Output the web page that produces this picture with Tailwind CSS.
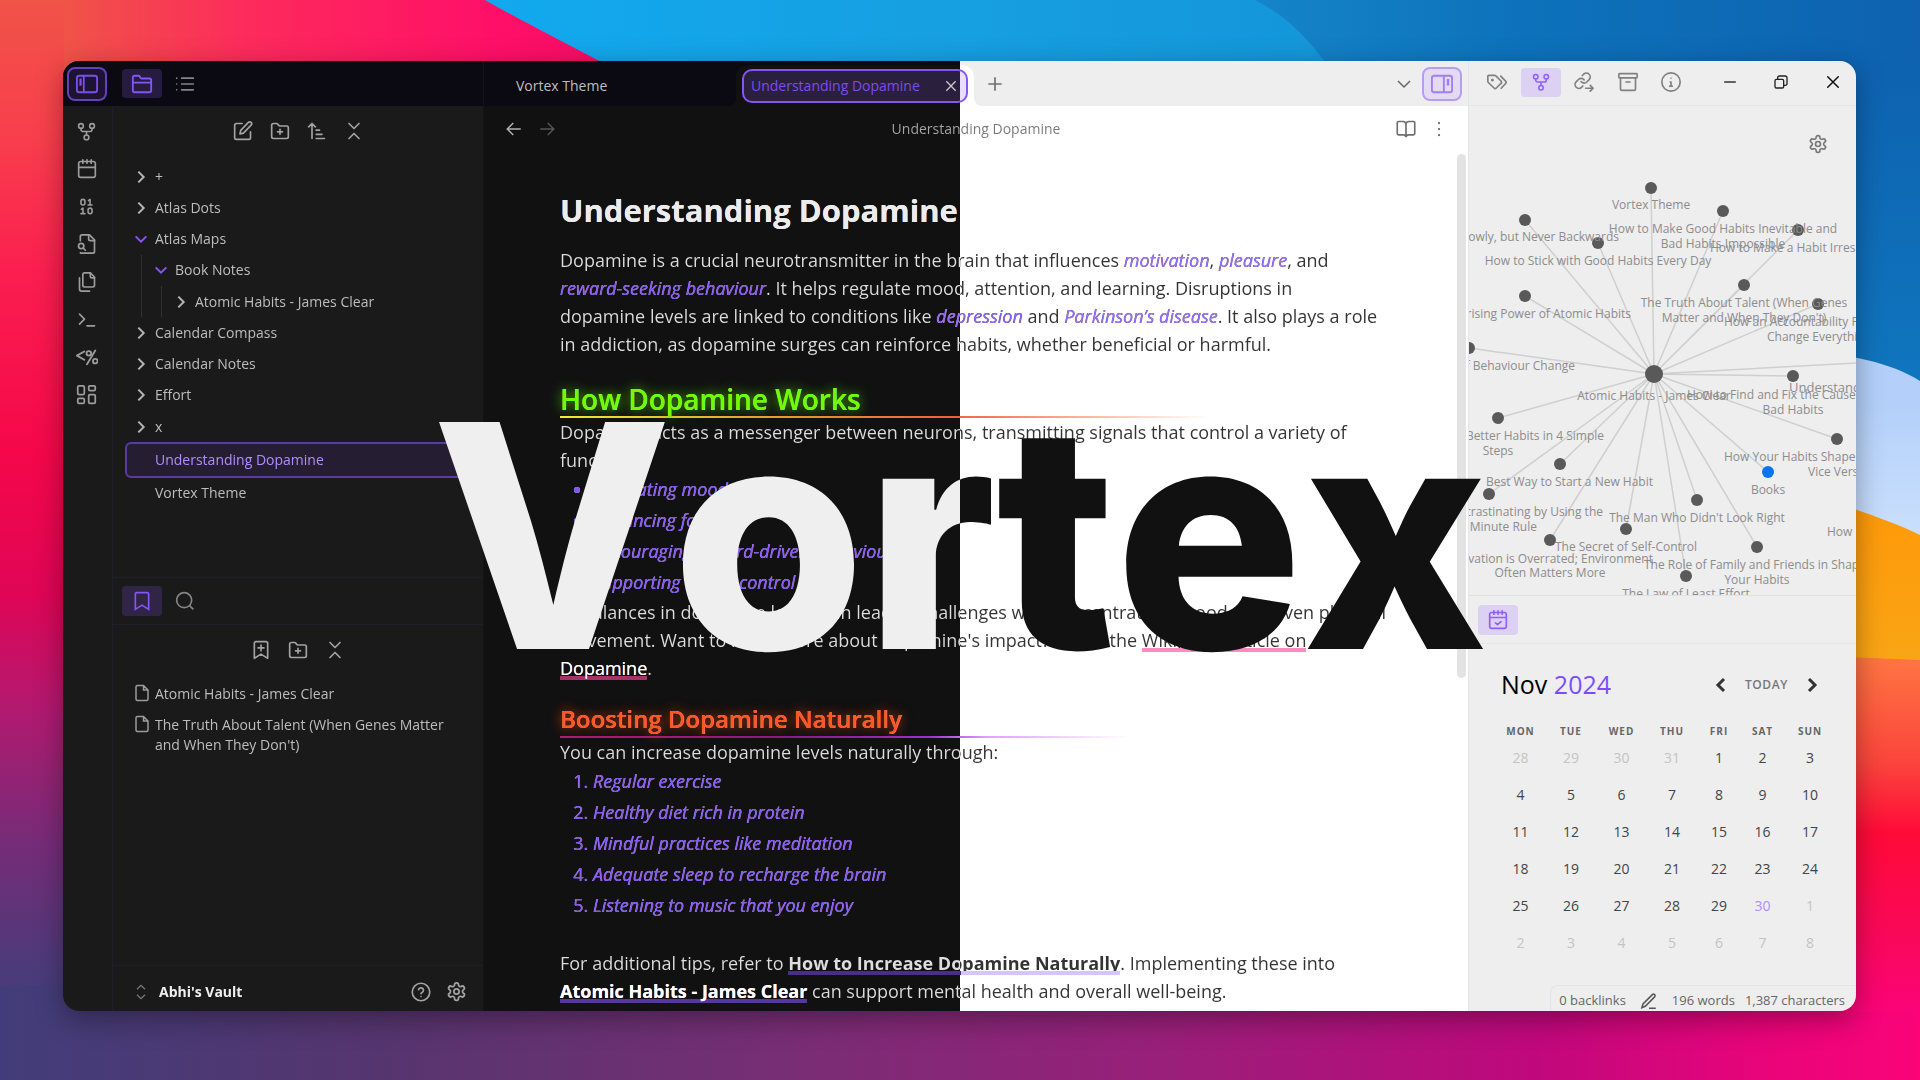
<!DOCTYPE html>
<html lang="en">
<head>
<meta charset="utf-8">
<meta name="viewport" content="width=device-width, initial-scale=1">
<title>Vortex</title>
<script src="https://cdn.jsdelivr.net/npm/@tailwindcss/browser@4"></script>
</head>
<body class="font-['Open_Sans','Noto_Sans',sans-serif] text-sm">

<!-- Icon sprite -->
<svg class="hidden" xmlns="http://www.w3.org/2000/svg">
  <symbol id="fork" viewBox="0 0 24 24"><circle cx="12" cy="19.500" r="3"/><circle cx="5" cy="5" r="3"/><circle cx="19" cy="5" r="3"/><path d="M5 8v1.500a2.500 2.500 0 0 0 2.500 2.500h9a2.500 2.500 0 0 0 2.500-2.500V8M12 12v4.500"/></symbol>
  <symbol id="calendar" viewBox="0 0 24 24"><path d="M7 1v4M12 1v4M17 1v4M2 10h20"/><rect x="2" y="3" width="20" height="19" rx="2.500"/></symbol>
  <symbol id="binary" viewBox="0 0 24 24"><rect x="5" y="3" width="5" height="7" rx="2.500"/><rect x="14" y="14" width="5" height="7" rx="2.500"/><path d="M14 10h5M14.500 4.500 16.500 3v7M5 21h5M5.500 15.500 7.500 14v7"/></symbol>
  <symbol id="filesearch" viewBox="0 0 24 24"><path d="M14 1v5a2 2 0 0 0 2 2h5"/><path d="M4 22.500c.5.400 1 .5 1.500.5H19a2 2 0 0 0 2-2V7l-6-6H6a2 2 0 0 0-2 2v5"/><circle cx="5" cy="14.500" r="3.200"/><path d="m7.500 17 2.500 2.500"/></symbol>
  <symbol id="files" viewBox="0 0 24 24"><path d="M21 7h-3a2 2 0 0 1-2-2V1"/><path d="M21 6v10a2 2 0 0 1-2 2H9a2 2 0 0 1-2-2V3a2 2 0 0 1 2-2h7z"/><path d="M3 7v13.500A2.500 2.500 0 0 0 5.500 23H15"/></symbol>
  <symbol id="terminal" viewBox="0 0 24 24"><path d="m3 17 6-6-6-6M12 19h9"/></symbol>
  <symbol id="template" viewBox="0 0 24 24"><path d="M9 6 1 10.500 9 15M21 5l-9 15"/><circle cx="14" cy="8" r="2.500"/><circle cx="21" cy="16.500" r="2.500"/></symbol>
  <symbol id="dashboard" viewBox="0 0 24 24"><rect x="2" y="2" width="7.500" height="10" rx="1.500"/><rect x="14.500" y="2" width="7.500" height="5.500" rx="1.500"/><rect x="14.500" y="12" width="7.500" height="10" rx="1.500"/><rect x="2" y="16.500" width="7.500" height="5.500" rx="1.500"/></symbol>
  <symbol id="folder" viewBox="0 0 24 24"><path d="M4 21h16a2 2 0 0 0 2-2V8a2 2 0 0 0-2-2h-8a2 2 0 0 1-1.700-.9l-.8-1.200A2 2 0 0 0 7.900 3H4a2 2 0 0 0-2 2v14a2 2 0 0 0 2 2zM2 10.500h20"/></symbol>
  <symbol id="folderplus" viewBox="0 0 24 24"><path d="M4 21h16a2 2 0 0 0 2-2V8a2 2 0 0 0-2-2h-8a2 2 0 0 1-1.700-.9l-.8-1.200A2 2 0 0 0 7.900 3H4a2 2 0 0 0-2 2v14a2 2 0 0 0 2 2zM12 10v6M9 13h6"/></symbol>
  <symbol id="list" viewBox="0 0 24 24"><path d="M8 5h14M8 12h14M8 19h14M2 5h.01M2 12h.01M2 19h.01"/></symbol>
  <symbol id="edit" viewBox="0 0 24 24"><path d="M11 3H4a2 2 0 0 0-2 2v15a2 2 0 0 0 2 2h15a2 2 0 0 0 2-2v-7M18.500 1.700a2.200 2.200 0 0 1 3.200 3.200L12.500 14.500l-4.200 1 1-4.200z"/></symbol>
  <symbol id="sort" viewBox="0 0 24 24"><path d="m2 7 4-4 4 4M6 3v18M11 11h4M11 16h7M11 21h10"/></symbol>
  <symbol id="collapse" viewBox="0 0 24 24"><path d="m6 21 6-6 6 6M6 3l6 6 6-6"/></symbol>
  <symbol id="updown" viewBox="0 0 24 24"><path d="m6 16 6 6 6-6M6 8l6-6 6 6"/></symbol>
  <symbol id="right" viewBox="0 0 24 24"><path d="m8 4 8 8-8 8"/></symbol>
  <symbol id="left" viewBox="0 0 24 24"><path d="m16 4-8 8 8 8"/></symbol>
  <symbol id="down" viewBox="0 0 24 24"><path d="m4 8 8 8 8-8"/></symbol>
  <symbol id="bookmark" viewBox="0 0 24 24"><path d="m20 22-8-5-8 5V4a2 2 0 0 1 2-2h12a2 2 0 0 1 2 2z"/></symbol>
  <symbol id="bookmarkplus" viewBox="0 0 24 24"><path d="m20 22-8-5-8 5V4a2 2 0 0 1 2-2h12a2 2 0 0 1 2 2zM12 6v7M8.500 9.500h7"/></symbol>
  <symbol id="search" viewBox="0 0 24 24"><circle cx="11" cy="11" r="9"/><path d="m22 22-4.500-4.500"/></symbol>
  <symbol id="file" viewBox="0 0 24 24"><path d="M14 2H6a2 2 0 0 0-2 2v16a2 2 0 0 0 2 2h12a2 2 0 0 0 2-2V8zM14 2v6h6"/></symbol>
  <symbol id="help" viewBox="0 0 24 24"><circle cx="12" cy="12" r="10.500"/><path d="M9 9.300a3 3 0 0 1 5.900 1c0 2-2.900 2.700-2.900 3.700M12 17.500h.01"/></symbol>
  <symbol id="gear" viewBox="0 0 24 24"><path d="M12.220 2h-.44a2 2 0 0 0-2 2v.18a2 2 0 0 1-1 1.730l-.43.25a2 2 0 0 1-2 0l-.15-.08a2 2 0 0 0-2.730.73l-.22.38a2 2 0 0 0 .73 2.730l.15.1a2 2 0 0 1 1 1.720v.51a2 2 0 0 1-1 1.740l-.15.09a2 2 0 0 0-.73 2.730l.22.38a2 2 0 0 0 2.730.73l.15-.08a2 2 0 0 1 2 0l.43.25a2 2 0 0 1 1 1.730V20a2 2 0 0 0 2 2h.44a2 2 0 0 0 2-2v-.18a2 2 0 0 1 1-1.730l.43-.25a2 2 0 0 1 2 0l.15.08a2 2 0 0 0 2.730-.73l.22-.39a2 2 0 0 0-.73-2.730l-.15-.08a2 2 0 0 1-1-1.740v-.5a2 2 0 0 1 1-1.740l.15-.09a2 2 0 0 0 .73-2.730l-.22-.38a2 2 0 0 0-2.730-.73l-.15.08a2 2 0 0 1-2 0l-.43-.25a2 2 0 0 1-1-1.730V4a2 2 0 0 0-2-2z"/><circle cx="12" cy="12" r="3"/></symbol>
  <symbol id="x" viewBox="0 0 24 24"><path d="M19 5 5 19M5 5l14 14"/></symbol>
  <symbol id="plus" viewBox="0 0 24 24"><path d="M12 4v16M4 12h16"/></symbol>
  <symbol id="minus" viewBox="0 0 24 24"><path d="M4 12h16"/></symbol>
  <symbol id="restore" viewBox="0 0 24 24"><rect x="3" y="8" width="13" height="13" rx="2"/><path d="M7 8V5.500A2.500 2.500 0 0 1 9.500 3h9A2.500 2.500 0 0 1 21 5.500v9a2.500 2.500 0 0 1-2.500 2.500H16"/></symbol>
  <symbol id="arrowleft" viewBox="0 0 24 24"><path d="m11 4-8 8 8 8M3 12h18"/></symbol>
  <symbol id="arrowright" viewBox="0 0 24 24"><path d="m13 4 8 8-8 8M21 12H3"/></symbol>
  <symbol id="book" viewBox="0 0 24 24"><path d="M12 6v16M9 19H3a1.500 1.500 0 0 1-1.500-1.500v-13A1.500 1.500 0 0 1 3 3h5.500A3.500 3.500 0 0 1 12 6.500 3.500 3.500 0 0 1 15.500 3H21a1.500 1.500 0 0 1 1.500 1.500v13A1.500 1.500 0 0 1 21 19h-6c-1.500 0-3 1-3 3 0-2-1.500-3-3-3z"/></symbol>
  <symbol id="dots" viewBox="0 0 24 24"><path d="M12 4h.01M12 12h.01M12 20h.01"/></symbol>
  <symbol id="tags" viewBox="0 0 24 24"><path d="M1 5v6.200a2 2 0 0 0 .6 1.400l6.800 6.600a2 2 0 0 0 2.800 0l5.600-5.600a2 2 0 0 0 0-2.800L10.300 4.400A2 2 0 0 0 8.900 4H2a1 1 0 0 0-1 1zM16.500 5l5.800 6a2 2 0 0 1 0 2.800L17 19.500"/><circle cx="6.500" cy="9.500" r=".8"/></symbol>
  <symbol id="linkout" viewBox="0 0 24 24"><path d="M8.500 11.500a4.500 4.500 0 0 0 6.800.5l2.900-2.900a4.600 4.600 0 0 0-6.500-6.500L10 4.200"/><path d="M12.200 9.500a4.500 4.500 0 0 0-6.800-.5l-2.900 2.900A4.600 4.600 0 0 0 9 18.400l1.600-1.600M14 19.500h9M19.500 16l3.500 3.500-3.500 3.500"/></symbol>
  <symbol id="archive" viewBox="0 0 24 24"><rect x="1" y="2" width="22" height="5" rx="1"/><path d="M3 7v13a2 2 0 0 0 2 2h14a2 2 0 0 0 2-2V7M9.500 12h5"/></symbol>
  <symbol id="info" viewBox="0 0 24 24"><circle cx="12" cy="12" r="11"/><path d="M12 17v-5h-1M12 7.500h.01M10.500 17h3"/></symbol>
  <symbol id="calcheck" viewBox="0 0 24 24"><path d="M7 1v4M12 1v4M17 1v4M2 9h20M9 15.500l2.500 2 4-3.500"/><rect x="2" y="3" width="20" height="19" rx="2.500"/></symbol>
  <symbol id="pen" viewBox="0 0 24 24"><path d="M12 21.500h9M16.500 3.500a2.100 2.100 0 0 1 3 3L7 19l-4.500 2L4 16z"/></symbol>
  <symbol id="panelleft" viewBox="0 0 24 24"><rect x="1" y="3" width="22" height="18" rx="2.500"/><path d="M8.500 3v18M4.700 7h.5v6h-.5z"/></symbol>
  <symbol id="panelright" viewBox="0 0 24 24"><rect x="1" y="3" width="22" height="18" rx="2.500"/><path d="M14 3v18M18.200 7.500h.7v5h-.7z"/></symbol>
</svg>

<!-- Wallpaper -->
<svg class="fixed inset-0 -z-10 h-full w-full" viewBox="0 0 1920 1080" preserveAspectRatio="none" xmlns="http://www.w3.org/2000/svg">
  <defs>
    <linearGradient id="wl" x1="0" y1="0" x2="0" y2="1"><stop offset="0" stop-color="#f05348"/><stop offset=".12" stop-color="#f8404c"/><stop offset=".25" stop-color="#fb1f4f"/><stop offset=".42" stop-color="#f5074a"/><stop offset=".55" stop-color="#e00556"/><stop offset=".66" stop-color="#b01a70"/><stop offset=".78" stop-color="#762c78"/><stop offset=".9" stop-color="#4b3b7a"/><stop offset="1" stop-color="#423d7a"/></linearGradient>
    <linearGradient id="wt"><stop offset="0" stop-color="#f05348"/><stop offset=".3" stop-color="#fd2a5c"/><stop offset=".7" stop-color="#ff0f68"/><stop offset="1" stop-color="#f00a64"/></linearGradient>
    <linearGradient id="wb"><stop offset="0" stop-color="#423d7a"/><stop offset=".2" stop-color="#56356f"/><stop offset=".4" stop-color="#762e74"/><stop offset=".6" stop-color="#98207a"/><stop offset=".8" stop-color="#c0087c"/><stop offset=".92" stop-color="#e9047a"/><stop offset="1" stop-color="#fa0478"/></linearGradient>
    <linearGradient id="ws"><stop offset="0" stop-color="#12a9ee"/><stop offset=".3" stop-color="#16a0e2"/><stop offset="1" stop-color="#1288cc"/></linearGradient>
    <linearGradient id="wd"><stop offset="0" stop-color="#1584c8"/><stop offset=".4" stop-color="#0d72bb"/><stop offset="1" stop-color="#0e62b0"/></linearGradient>
    <linearGradient id="wk" x1="0" y1="0" x2="0" y2="1"><stop offset="0" stop-color="#0e62b0"/><stop offset="1" stop-color="#1078c0"/></linearGradient>
    <linearGradient id="wc" x1="0" y1="0" x2="0" y2="1"><stop offset=".2" stop-color="#b4d0fa"/><stop offset="1" stop-color="#d8e9ff"/></linearGradient>
    <linearGradient id="wo" x1="0" y1="0" x2="0" y2="1"><stop offset="0" stop-color="#ff9808"/><stop offset="1" stop-color="#f8a818"/></linearGradient>
    <linearGradient id="wr" x1="0" y1="0" x2="0" y2="1"><stop offset="0" stop-color="#ff7642"/><stop offset=".3" stop-color="#fb453c"/><stop offset=".5" stop-color="#ff0a38"/><stop offset=".75" stop-color="#fa0856"/><stop offset="1" stop-color="#fa0478"/></linearGradient>
  </defs>
  <rect width="1920" height="1080" fill="url(#wl)"/>
  <rect x="64" width="620" height="200" fill="url(#wt)"/>
  <path d="M485 0C520 20 560 40 605 64L700 200H1920V0z" fill="url(#ws)"/>
  <path d="M1255 0C1285 15 1305 35 1325 62V200H1920V0z" fill="url(#wd)"/>
  <rect x="1800" y="60" width="120" height="360" fill="url(#wk)"/>
  <rect y="985" width="1920" height="95" fill="url(#wb)"/>
  <path d="M1800 350C1850 355 1890 362 1920 381V620H1800z" fill="url(#wc)"/>
  <path d="M1800 490C1850 508 1890 520 1920 535V700H1800z" fill="url(#wo)"/>
  <path d="M1800 655L1920 660V1012H1800z" fill="url(#wr)"/>
</svg>

<div class="flex min-h-screen pt-[61px] pr-16 pb-[69px] pl-[63px]">
<div class="relative flex flex-1 overflow-hidden rounded-2xl shadow-[0_8px_28px_rgba(0,0,0,0.35)]">

  <!-- Left side -->
  <aside class="flex w-[421px] shrink-0 flex-col border-r border-[#141414] bg-[#1a1a1a] text-[#bdbdbd]">
    <div class="flex h-[45px] shrink-0 items-center bg-[#0b0a12] pl-1">
      <button aria-label="Toggle left sidebar" class="flex h-[34px] w-10 items-center justify-center rounded-lg border-2 border-[#6541b5] bg-[#1c1430]"><svg class="size-[22px] fill-none stroke-[#7c4dea] stroke-2"><use href="#panelleft"/></svg></button>
      <button aria-label="Files" class="ml-[15px] flex h-[29px] w-10 items-center justify-center rounded bg-[#261b40]"><svg class="size-[22px] fill-none stroke-[#8655f5] stroke-2"><use href="#folder"/></svg></button>
      <button aria-label="Outline" class="ml-3 flex size-[22px] items-center justify-center"><svg class="size-5 fill-none stroke-[#858585] stroke-2 [stroke-linecap:round]"><use href="#list"/></svg></button>
    </div>
    <div class="flex flex-1">
      <nav class="flex w-[50px] shrink-0 flex-col items-center border-r border-[#1e1e26] pt-[14px] pr-[2px]">
        <div class="flex h-[286px] flex-col justify-between fill-none stroke-[#9c9c9c] stroke-2 [stroke-linecap:round] [stroke-linejoin:round]">
          <button aria-label="Graph view" class="size-[22px]"><svg class="mx-auto size-[19px]"><use href="#fork"/></svg></button>
          <button aria-label="Daily note" class="size-[22px]"><svg class="mx-auto size-5"><use href="#calendar"/></svg></button>
          <button aria-label="Binary" class="size-[22px]"><svg class="mx-auto size-[19px]"><use href="#binary"/></svg></button>
          <button aria-label="Find in files" class="size-[22px]"><svg class="mx-auto size-5"><use href="#filesearch"/></svg></button>
          <button aria-label="Templates" class="size-[22px]"><svg class="mx-auto size-5"><use href="#files"/></svg></button>
          <button aria-label="Command palette" class="size-[22px]"><svg class="mx-auto size-5"><use href="#terminal"/></svg></button>
          <button aria-label="Templater" class="size-[22px]"><svg class="mx-auto size-[22px]"><use href="#template"/></svg></button>
          <button aria-label="Dashboard" class="size-[22px]"><svg class="mx-auto size-[21px]"><use href="#dashboard"/></svg></button>
        </div>
      </nav>
      <div class="flex min-w-0 flex-1 flex-col">
        <div class="flex h-[50px] items-center justify-center gap-[17px] fill-none stroke-[#a3a3a3] stroke-2 [stroke-linecap:round] [stroke-linejoin:round]">
          <button aria-label="New note"><svg class="size-5"><use href="#edit"/></svg></button>
          <button aria-label="New folder"><svg class="size-5"><use href="#folderplus"/></svg></button>
          <button aria-label="Sort order"><svg class="size-5"><use href="#sort"/></svg></button>
          <button aria-label="Collapse all"><svg class="size-5"><use href="#collapse"/></svg></button>
        </div>
        <ul class="mt-[5px] flex h-[348px] flex-col pr-2 pl-3 fill-none stroke-[#b5b5b5] stroke-3">
          <li class="flex flex-1 items-center pl-2"><svg class="mr-[6px] size-4"><use href="#right"/></svg>+</li>
          <li class="flex flex-1 items-center pl-2"><svg class="mr-[6px] size-4"><use href="#right"/></svg>Atlas Dots</li>
          <li class="flex flex-1 items-center pl-2"><svg class="mr-[6px] size-4 stroke-[#8655f5]"><use href="#down"/></svg>Atlas Maps</li>
          <li class="flex flex-1 items-stretch pl-4"><span class="flex items-center border-l border-[#303030] pl-[11px]"><svg class="mr-[6px] size-4 stroke-[#8655f5]"><use href="#down"/></svg>Book Notes</span></li>
          <li class="flex flex-1 items-stretch pl-4"><span class="flex border-l border-[#303030] pl-[19px]"><span class="flex items-center border-l border-[#303030] pl-[11px]"><svg class="mr-[6px] size-4"><use href="#right"/></svg>Atomic Habits - James Clear</span></span></li>
          <li class="flex flex-1 items-center pl-2"><svg class="mr-[6px] size-4"><use href="#right"/></svg>Calendar Compass</li>
          <li class="flex flex-1 items-center pl-2"><svg class="mr-[6px] size-4"><use href="#right"/></svg>Calendar Notes</li>
          <li class="flex flex-1 items-center pl-2"><svg class="mr-[6px] size-4"><use href="#right"/></svg>Effort</li>
          <li class="flex flex-1 items-center pl-2"><svg class="mr-[6px] size-4"><use href="#right"/></svg>x</li>
          <li class="flex flex-1 items-center rounded-md border-2 border-[#5a3ba6] bg-[#251e33] pl-7 text-[#b08cff]">Understanding Dopamine</li>
          <li class="flex flex-1 items-center pl-[30px]">Vortex Theme</li>
        </ul>
        <div class="mt-[68px] flex h-12 items-center border-y border-[#1f1f28] pl-[9px]">
          <button aria-label="Bookmarks" class="flex h-[30px] w-10 items-center justify-center rounded bg-[#312547]"><svg class="size-5 fill-none stroke-[#8655f5] stroke-2"><use href="#bookmark"/></svg></button>
          <button aria-label="Search" class="ml-[13px]"><svg class="size-5 fill-none stroke-[#858585] stroke-2"><use href="#search"/></svg></button>
        </div>
        <div class="flex h-[49px] items-center justify-center gap-[17px] fill-none stroke-[#a3a3a3] stroke-2 [stroke-linecap:round] [stroke-linejoin:round]">
          <button aria-label="Bookmark active note"><svg class="size-5"><use href="#bookmarkplus"/></svg></button>
          <button aria-label="New bookmark group"><svg class="size-5"><use href="#folderplus"/></svg></button>
          <button aria-label="Collapse bookmarks"><svg class="size-5"><use href="#collapse"/></svg></button>
        </div>
        <ul class="mt-[10px] flex flex-col gap-[11px] pl-5 fill-none stroke-[#9c9c9c] stroke-2 leading-5">
          <li class="flex"><svg class="mr-1 size-[18px] shrink-0"><use href="#file"/></svg>Atomic Habits - James Clear</li>
          <li class="flex"><svg class="mr-1 size-[18px] shrink-0"><use href="#file"/></svg><span>The Truth About Talent (When Genes Matter<br>and When They Don't)</span></li>
        </ul>
        <div class="mt-auto flex h-[46px] items-center border-t border-[#1f1f28] pt-[6px] pr-4 pl-[20px]">
          <svg class="mr-[10px] size-4 fill-none stroke-[#777] stroke-2"><use href="#updown"/></svg>
          <span class="font-bold text-[#f0f0f0]">Abhi's Vault</span>
          <button aria-label="Help" class="ml-auto"><svg class="size-5 fill-none stroke-[#a3a3a3] stroke-2 [stroke-linecap:round]"><use href="#help"/></svg></button>
          <button aria-label="Settings" class="ml-[15px]"><svg class="size-[21px] fill-none stroke-[#a3a3a3] stroke-2"><use href="#gear"/></svg></button>
        </div>
      </div>
    </div>
  </aside>

  <!-- Editor: night on the left half of the window, day on the right half -->
  <main class="flex min-w-0 flex-1 flex-col bg-[linear-gradient(90deg,#111_50%,#fff_50%)] bg-fixed">
    <div class="flex h-[45px] shrink-0">
      <div class="flex w-[252px] items-center rounded-br-lg bg-[#0b0a12] pt-[5px] pl-8 text-[#bdbdbd]">Vortex Theme</div>
      <div class="w-[238px] bg-[linear-gradient(90deg,#0b0a12_50%,#eee_50%)] bg-fixed pt-1">
        <div class="h-full rounded-t-xl bg-[linear-gradient(90deg,#111_50%,#fff_50%)] bg-fixed px-[6px] pt-1">
          <div class="flex h-[34px] items-center rounded-[10px] border-2 border-[#8655f5] bg-[linear-gradient(90deg,#2a1f3d_50%,#e9defd_50%)] bg-fixed pl-[7px] text-[#7c4dea]">Understanding Dopamine
            <button aria-label="Close tab" class="mr-[7px] ml-auto"><svg class="size-4 fill-none stroke-[#c8c8c8] stroke-2"><use href="#x"/></svg></button>
          </div>
        </div>
      </div>
      <div class="flex flex-1 items-center rounded-bl-lg bg-[#eee] pl-[11px] pr-[6px]">
        <button aria-label="New tab"><svg class="size-5 fill-none stroke-[#707070] stroke-2"><use href="#plus"/></svg></button>
        <button aria-label="Tab list" class="ml-auto"><svg class="size-[18px] fill-none stroke-[#666] stroke-2"><use href="#down"/></svg></button>
        <button aria-label="Toggle right sidebar" class="ml-[9px] flex h-[34px] w-10 items-center justify-center rounded-lg border-2 border-[#b79cf2] bg-[#e2dbf1]"><svg class="size-[22px] fill-none stroke-[#a47cf8] stroke-2"><use href="#panelright"/></svg></button>
      </div>
    </div>
    <div class="flex h-[45px] shrink-0 items-center pr-5 pl-[21px]">
      <button aria-label="Back"><svg class="size-[18px] fill-none stroke-[#b0b0b0] stroke-2"><use href="#arrowleft"/></svg></button>
      <button aria-label="Forward" class="ml-[15px]"><svg class="size-[18px] fill-none stroke-[#555] stroke-2"><use href="#arrowright"/></svg></button>
      <span class="flex-1 bg-[linear-gradient(90deg,#a8a8a8_50%,#777_50%)] bg-fixed bg-clip-text text-center text-transparent">Understanding Dopamine</span>
      <button aria-label="Reading view"><svg class="size-5 fill-none stroke-[#707070] stroke-2"><use href="#book"/></svg></button>
      <button aria-label="More options" class="ml-[14px]"><svg class="size-[18px] fill-none stroke-[#666] stroke-3 [stroke-linecap:round]"><use href="#dots"/></svg></button>
    </div>
    <div class="flex flex-1">
      <article class="flex-1 bg-[linear-gradient(90deg,#dedede_50%,#333_50%)] bg-fixed bg-clip-text pt-[39px] pl-[76px] text-lg leading-7 whitespace-nowrap text-transparent">
        <h1 class="text-[31px] leading-10 font-bold text-[#ececec]">Understanding Dopamine</h1>
        <p class="mt-4">Dopamine is a crucial neurotransmitter in the brain that influences <em class="text-[#a070ff]">motivation</em>, <em class="text-[#a070ff]">pleasure</em>, and<br>
          <em class="text-[#8257f0]">reward-seeking behaviour</em>. It helps regulate mood, attention, and learning. Disruptions in<br>
          dopamine levels are linked to conditions like <em class="text-[#9366f7]">depression</em> and <em class="text-[#a070ff]">Parkinson’s disease</em>. It also plays a role<br>
          in addiction, as dopamine surges can reinforce habits, whether beneficial or harmful.</p>
        <h2 class="mt-6 text-[28px] leading-[34px] font-semibold text-[#6dfc00] text-shadow-[0_0_12px_#4fc400]">How Dopamine Works</h2>
        <div class="h-0.5 w-[650px] bg-[linear-gradient(90deg,#f5ee38,#f0a030_30%,#f0623a_60%,#ff6a4488_80%,transparent)]"></div>
        <p>Dopamine acts as a messenger between neurons, transmitting signals that control a variety of<br>functions:</p>
        <ul class="list-disc pl-[33px] leading-[31px] text-[#8257f0]">
          <li><em>Regulating mood</em></li>
          <li><em>Enhancing focus</em></li>
          <li><em>Encouraging reward-driven behaviour</em></li>
          <li><em>Supporting motor control</em></li>
        </ul>
        <p>Imbalances in dopamine levels can lead to challenges with concentration, mood, and even physical<br>
          movement. Want to learn more about dopamine's impact? Check the <a href="#" class="bg-[linear-gradient(#fb8cc0,#fb8cc0)] bg-[length:100%_4px] bg-bottom bg-no-repeat">Wikipedia article on</a><br>
          <a href="#" class="bg-[linear-gradient(#a83268,#a83268)] bg-[length:100%_4px] bg-bottom bg-no-repeat text-white">Dopamine</a>.</p>
        <h2 class="mt-5 text-2xl leading-[34px] font-semibold text-[#ff5722] text-shadow-[0_0_12px_#c23c12]">Boosting Dopamine Naturally</h2>
        <div class="h-0.5 w-[570px] bg-[linear-gradient(90deg,#b01d6c,#8a1a90_40%,#a030d0_65%,#e0a0ff_75%,transparent)]"></div>
        <p>You can increase dopamine levels naturally through:</p>
        <ol class="list-decimal pl-[33px] leading-[31px] text-[#8257f0]">
          <li><em>Regular exercise</em></li>
          <li><em>Healthy diet rich in protein</em></li>
          <li><em>Mindful practices like meditation</em></li>
          <li><em>Adequate sleep to recharge the brain</em></li>
          <li><em>Listening to music that you enjoy</em></li>
        </ol>
        <p class="mt-7">For additional tips, refer to <a href="#" class="bg-[linear-gradient(90deg,#472f85_52%,#d4c4ff_52%)] bg-[length:100%_4px] bg-bottom bg-no-repeat font-bold">How to Increase Dopamine Naturally</a>. Implementing these into<br>
          <a href="#" class="bg-[linear-gradient(#56379c,#56379c)] bg-[length:100%_4px] bg-bottom bg-no-repeat font-bold text-white">Atomic Habits - James Clear</a> can support mental health and overall well-being.</p>
      </article>
      <div class="mt-[3px] mr-[2px] h-[524px] w-[9px] shrink-0 rounded-full bg-[#e3e3e3]"></div>
    </div>
  </main>

  <!-- Right side -->
  <aside class="flex w-[388px] shrink-0 flex-col border-l border-[#e6e4ee] bg-[#eee] text-[#444]">
    <div class="flex h-[45px] shrink-0 items-center border-b border-[#e6e4ee] pr-[14px] pb-[2px] pl-[18px] fill-none stroke-[#808080] stroke-2 [stroke-linecap:round] [stroke-linejoin:round]">
      <button aria-label="Tags"><svg class="size-5"><use href="#tags"/></svg></button>
      <button aria-label="Local graph" class="ml-[14px] flex h-[29px] w-10 items-center justify-center rounded bg-[#dcd1f3]"><svg class="size-[18px] stroke-[#8f5ff8]"><use href="#fork"/></svg></button>
      <button aria-label="Outgoing links" class="ml-[13px]"><svg class="size-5"><use href="#linkout"/></svg></button>
      <button aria-label="Archive" class="ml-6"><svg class="size-5"><use href="#archive"/></svg></button>
      <button aria-label="Info" class="ml-[23px]"><svg class="size-5"><use href="#info"/></svg></button>
      <button aria-label="Minimise" class="ml-auto"><svg class="size-4 stroke-[#333]"><use href="#minus"/></svg></button>
      <button aria-label="Restore" class="ml-[35px]"><svg class="size-4 stroke-[#222]"><use href="#restore"/></svg></button>
      <button aria-label="Close" class="ml-[35px]"><svg class="size-[18px] stroke-[#111]"><use href="#x"/></svg></button>
    </div>
    <div class="relative h-[490px] border-b border-[#e2e2e6]">
      <svg class="h-full w-full overflow-hidden fill-[#8c8c8c] text-xs" xmlns="http://www.w3.org/2000/svg">
        <path class="stroke-[#cfcfcf]" d="M185 268 182 82M185 268 254 105M185 268 329 124M185 268 56 114M185 268 129 137M185 268 275 179M185 268 349 198M185 268 56 190M185 268 0 242M185 268 324 270M185 268 388 257M185 268 368 333M185 268 299 366M185 268 29 312M185 268 91 358M185 268 20 388M185 268 228 394M185 268 157 423M185 268 81 434M185 268 288 441M185 268 217 470" fill="none" stroke-width="1.500"/>
        <g class="fill-[#595959]">
          <circle cx="182" cy="82" r="6"/><circle cx="254" cy="105" r="6"/><circle cx="329" cy="124" r="6"/><circle cx="56" cy="114" r="6"/><circle cx="129" cy="137" r="6"/><circle cx="275" cy="179" r="6"/><circle cx="349" cy="198" r="6"/><circle cx="56" cy="190" r="6"/><circle cx="0" cy="242" r="6"/><circle cx="324" cy="270" r="6"/><circle cx="368" cy="333" r="6"/><circle cx="29" cy="312" r="6"/><circle cx="91" cy="358" r="6"/><circle cx="20" cy="388" r="6"/><circle cx="228" cy="394" r="6"/><circle cx="157" cy="423" r="6"/><circle cx="81" cy="434" r="6"/><circle cx="288" cy="441" r="6"/><circle cx="217" cy="470" r="6"/>
          <circle cx="185" cy="268" r="9"/>
        </g>
        <circle cx="299" cy="366" r="6" fill="#0a74f5"/>
        <g text-anchor="middle">
          <text x="182" y="103">Vortex Theme</text>
          <text x="254" y="127">How to Make Good Habits Inevitable and</text>
          <text x="254" y="142">Bad Habits Impossible</text>
          <text x="129" y="159">How to Stick with Good Habits Every Day</text>
          <text x="275" y="201">The Truth About Talent (When Genes</text>
          <text x="275" y="216">Matter and When They Don't)</text>
          <text x="185" y="294">Atomic Habits - James Clear</text>
          <text x="324" y="308">Bad Habits</text>
          <text x="299" y="388">Books</text>
          <text x="29" y="349">Steps</text>
          <text x="228" y="416">The Man Who Didn't Look Right</text>
          <text x="157" y="445">The Secret of Self-Control</text>
          <text x="81" y="471">Often Matters More</text>
          <text x="288" y="478">Your Habits</text>
          <text x="217" y="492">The Law of Least Effort</text>
        </g>
        <g text-anchor="end">
          <text x="150" y="135">lowly, but Never Backwards</text>
          <text x="162" y="212">rising Power of Atomic Habits</text>
          <text x="106" y="264">f Behaviour Change</text>
          <text x="135" y="334">Better Habits in 4 Simple</text>
          <text x="184" y="380">Best Way to Start a New Habit</text>
          <text x="134" y="410">crastinating by Using the</text>
          <text x="68" y="425">Minute Rule</text>
          <text x="184" y="457">tivation is Overrated; Environment</text>
        </g>
        <text x="241" y="146">How to Make a Habit Irresis</text>
        <text x="255" y="220">How an Accountability P</text>
        <text x="298" y="235">Change Everythi</text>
        <text x="218" y="293">How to Find and Fix the Causes</text>
        <text x="320" y="286" class="text-[13px]">Understand</text>
        <text x="255" y="355">How Your Habits Shape Y</text>
        <text x="339" y="370">Vice Vers</text>
        <text x="358" y="430">How</text>
        <text x="175" y="463">The Role of Family and Friends in Shapi</text>
      </svg>
      <button aria-label="Graph settings" class="absolute top-7 right-7"><svg class="size-5 fill-none stroke-[#777] stroke-2"><use href="#gear"/></svg></button>
    </div>
    <div class="flex h-12 items-center border-b border-[#e6e4ee] pl-[9px]">
      <button aria-label="Calendar" class="flex h-[30px] w-10 items-center justify-center rounded bg-[#dcd1f3]"><svg class="size-5 fill-none stroke-[#8f5ff8] stroke-2 [stroke-linecap:round]"><use href="#calcheck"/></svg></button>
    </div>
    <div class="flex h-[60px] items-center pt-[22px] pr-[35px] pl-[32px]">
      <h3 class="text-[25px] font-medium text-black">Nov <span class="text-[#7c4dff]">2024</span></h3>
      <button aria-label="Previous month" class="ml-auto"><svg class="size-[18px] fill-none stroke-[#333] stroke-4"><use href="#left"/></svg></button>
      <button class="mx-[15px] text-xs font-semibold tracking-wider text-[#777]">TODAY</button>
      <button aria-label="Next month"><svg class="size-[18px] fill-none stroke-[#333] stroke-4"><use href="#right"/></svg></button>
    </div>
    <table class="mt-[19px] ml-[26px] w-[341px] table-fixed text-center text-sm text-[#444]">
      <colgroup><col class="w-[51px]"><col class="w-[50px]"><col class="w-[51px]"><col class="w-[50px]"><col class="w-11"><col class="w-[43px]"><col class="w-[52px]"></colgroup>
      <thead><tr class="h-4 text-[10px] leading-4 tracking-widest text-[#666]"><th>MON</th><th>TUE</th><th>WED</th><th>THU</th><th>FRI</th><th>SAT</th><th>SUN</th></tr></thead>
      <tbody>
        <tr class="h-[37px]"><td class="text-[#c4c4c4]">28</td><td class="text-[#c4c4c4]">29</td><td class="text-[#c4c4c4]">30</td><td class="text-[#c4c4c4]">31</td><td>1</td><td>2</td><td>3</td></tr>
        <tr class="h-[37px]"><td>4</td><td>5</td><td>6</td><td>7</td><td>8</td><td>9</td><td>10</td></tr>
        <tr class="h-[37px]"><td>11</td><td>12</td><td>13</td><td>14</td><td>15</td><td>16</td><td>17</td></tr>
        <tr class="h-[37px]"><td>18</td><td>19</td><td>20</td><td>21</td><td>22</td><td>23</td><td>24</td></tr>
        <tr class="h-[37px]"><td>25</td><td>26</td><td>27</td><td>28</td><td>29</td><td class="text-[#b08cff]">30</td><td class="text-[#c4c4c4]">1</td></tr>
        <tr class="h-[37px] text-[#c4c4c4]"><td>2</td><td>3</td><td>4</td><td>5</td><td>6</td><td>7</td><td>8</td></tr>
      </tbody>
    </table>
    <footer class="mt-auto ml-auto flex h-[26px] items-center rounded-tl-lg border-t border-l border-[#e4e2ee] pt-1 pr-[11px] pl-2 text-[13px] text-[#666]">
      <span>0 backlinks</span>
      <svg class="mx-[14px] size-[18px] fill-none stroke-[#555] stroke-2"><use href="#pen"/></svg>
      <span>196 words</span>
      <span class="ml-[10px]">1,387 characters</span>
    </footer>
  </aside>

</div>
</div>

<!-- Wordmark -->
<div class="pointer-events-none absolute inset-x-0 top-[353px] bg-[linear-gradient(90deg,#efefef_50%,#111_50%)] bg-fixed bg-clip-text text-center font-['Inter',sans-serif] text-[312px] leading-[366px] font-extrabold text-transparent [font-kerning:none]">Vortex</div>

</body>
</html>
